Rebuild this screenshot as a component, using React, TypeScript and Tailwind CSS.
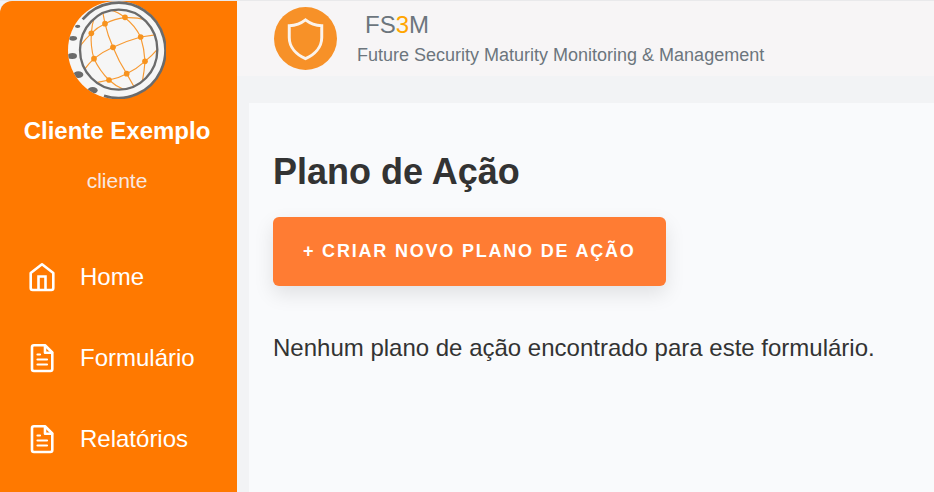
function GlobeLogo() {
  return (
    <svg viewBox="39 3 294 294" className="size-[98px]" role="img" aria-label="FS3M">
      <clipPath id="disc">
        <circle cx="186" cy="150" r="147" />
      </clipPath>
      <clipPath id="globe">
        <ellipse cx="191" cy="149" rx="117" ry="120" />
      </clipPath>
      <circle cx="186" cy="150" r="147" fill="#f6f6f6" />
      <g clipPath="url(#disc)" fill="#6b6b6b">
        <ellipse cx="68" cy="79" rx="8" ry="5" />
        <ellipse cx="54" cy="115" rx="12" ry="7" />
        <ellipse cx="52" cy="168" rx="14" ry="9" />
        <ellipse cx="70" cy="224" rx="15" ry="10" />
        <ellipse cx="113" cy="271" rx="15" ry="10" />
      </g>
      <path d="M83 58A141 143 0 1 1 147 287" fill="none" stroke="#6b6b6b" strokeWidth="8" />
      <g clipPath="url(#globe)" fill="none" stroke="#f79a33" strokeWidth="3.5">
        <path d="M76 137Q92 116 109 100Q126 82 150 71Q180 56 210 53Q242 51 274 60" />
        <path d="M88 209Q101 191 117 176Q142 156 174 142Q213 123 257 111L306 104" />
        <path d="M124 248L162 240Q190 235 215 221Q246 206 270 184Q292 166 307 148" />
        <path d="M118 52Q110 76 109 100Q106 140 117 176Q134 212 162 240Q180 257 205 268" />
        <path d="M143 35L150 71Q158 106 174 142Q191 184 215 221L238 262" />
        <path d="M163 29Q190 36 210 53Q240 76 257 111Q268 146 270 184Q268 214 262 245" />
      </g>
      <g fill="#f7931e">
        <circle cx="109" cy="100" r="8.500" />
        <circle cx="150" cy="71" r="8.500" />
        <circle cx="210" cy="52" r="8.500" />
        <circle cx="257" cy="111" r="8.500" />
        <circle cx="174" cy="142" r="8.500" />
        <circle cx="117" cy="176" r="8.500" />
        <circle cx="270" cy="184" r="8.500" />
        <circle cx="215" cy="221" r="8.500" />
        <circle cx="162" cy="240" r="8.500" />
      </g>
      <ellipse cx="191" cy="149" rx="116" ry="120" fill="none" stroke="#6b6b6b" strokeWidth="7" />
    </svg>
  );
}

function ShieldLogo() {
  return (
    <svg viewBox="0 0 64 64" className="size-[63px] shrink-0" aria-hidden="true">
      <circle cx="32" cy="32" r="32" fill="#f79128" />
      <path
        d="M32 13Q25 18.500 15.500 19V31C15.500 41 23 48.500 32 52.500C41 48.500 48.500 41 48.500 31V19Q39 18.500 32 13Z"
        fill="none"
        stroke="#fbf3ec"
        strokeWidth="3"
      />
    </svg>
  );
}

function HomeIcon() {
  return (
    <svg viewBox="0 0 28 30" className="h-[30px] w-7" fill="none" stroke="currentColor" strokeWidth="2.6" strokeLinejoin="round" aria-hidden="true">
      <path d="M14 2.300L25.300 11V26Q25.300 28 23.300 28H4.700Q2.700 28 2.700 26V11Z" />
      <path d="M10.500 28V14.500H17.500V28" strokeLinejoin="miter" />
    </svg>
  );
}

function DocumentIcon() {
  return (
    <svg viewBox="0 0 28 30" className="h-[30px] w-7" fill="none" stroke="currentColor" strokeWidth="2.6" strokeLinecap="round" strokeLinejoin="round" aria-hidden="true">
      <path d="M6 2.300H17L24.300 9.500V26Q24.300 28 22.300 28H6Q4 28 4 26V4.300Q4 2.300 6 2.300Z" />
      <path d="M17 3V9.700H24" />
      <path d="M9.500 11.500H12M9.500 16.500H19M9.500 21.500H19" strokeWidth="2.2" />
    </svg>
  );
}

const links = [
  { label: "Home", Icon: HomeIcon },
  { label: "Formulário", Icon: DocumentIcon },
  { label: "Relatórios", Icon: DocumentIcon },
];

export default function App() {
  return (
    <div className="flex min-h-screen border-t border-[#e9e9eb] bg-[#f2f3f5] font-['Liberation_Sans',Arial,sans-serif] text-2xl">
      <aside className="w-[237px] shrink-0 rounded-tl-xl bg-[#ff7900] text-white">
        <div className="flex flex-col items-center pr-[3px]">
          <GlobeLogo />
          <p className="mt-4 font-bold leading-8">Cliente Exemplo</p>
          <p className="mt-5 text-[21px] leading-7 text-[#f8e8e0]">cliente</p>
        </div>
        <nav className="mt-[41px]" aria-label="Menu">
          {links.map(({ label, Icon }) => (
            <a key={label} href="#" className="flex h-[81px] items-center gap-6 pl-7">
              <Icon />
              {label}
            </a>
          ))}
        </nav>
      </aside>
      <div className="flex min-w-0 flex-1 flex-col">
        <header className="flex h-[75px] items-center gap-5 bg-[#f7f5f6] pl-[37px] text-[#6c757d]">
          <ShieldLogo />
          <div>
            <p className="pl-2 leading-8">
              FS<span className="text-[#ffa500]">3</span>M
            </p>
            <p className="text-lg leading-7">Future Security Maturity Monitoring &amp; Management</p>
          </div>
        </header>
        <main className="ml-3 mt-[27px] flex-1 bg-[#f9fafc] px-6 pt-12 text-[#333333]">
          <h1 className="text-4xl font-bold leading-[42px]">Plano de Ação</h1>
          <button
            type="button"
            className="mt-6 rounded-md bg-[#ff7c33] px-[30px] py-5 text-lg font-bold uppercase leading-[29px] tracking-widest text-white shadow-[0_8px_20px_rgba(0,0,0,0.1)]"
          >
            + Criar novo plano de ação
          </button>
          <p className="mt-11 leading-9">Nenhum plano de ação encontrado para este formulário.</p>
        </main>
      </div>
    </div>
  );
}
